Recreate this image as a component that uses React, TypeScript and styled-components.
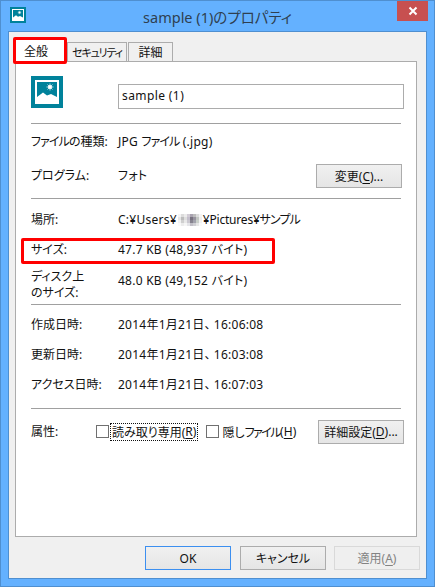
import React from 'react';
import styled, { createGlobalStyle } from 'styled-components';

const FONT = `"Noto Sans", "Noto Sans CJK JP", sans-serif`;

const GlobalStyle = createGlobalStyle`
  html, body {
    margin: 0;
    padding: 0;
    background: #64b1ff;
  }
  * {
    box-sizing: border-box;
  }
`;

const Window = styled.div`
  position: relative;
  width: 435px;
  height: 587px;
  padding: 0 7px 7px;
  display: flex;
  flex-direction: column;
  background: #64b1ff;
  border: 1px solid #4f8fd0;
  font-family: ${FONT};
  font-feature-settings: "palt";
  font-size: 12px;
  color: #111;
`;

const TitleBar = styled.div`
  position: relative;
  height: 30px;
  flex: none;
  display: flex;
  align-items: center;
  justify-content: center;
  font-size: 14.5px;
  color: #2f3f50;
`;

const AppIcon = styled.div`
  position: absolute;
  left: 2px;
  top: 6px;
  display: flex;
`;

const CloseButton = styled.div`
  position: absolute;
  right: -1px;
  top: 0;
  width: 31px;
  height: 20px;
  background: #c75050;
  display: flex;
  align-items: center;
  justify-content: center;
`;

const Client = styled.div`
  flex: 1;
  padding: 6px 9px 8px 6px;
  display: flex;
  flex-direction: column;
  background: #f0f0f0;
  border: 1px solid #4f8fd0;
`;

const TabStrip = styled.div`
  display: flex;
  align-items: flex-end;
  height: 24px;
  flex: none;
  gap: 1px;
  position: relative;
  z-index: 1;
  margin-bottom: -1px;
`;

const Tab = styled.div<{ $active?: boolean; $width: number }>`
  width: ${(p) => p.$width}px;
  height: ${(p) => (p.$active ? 24 : 20)}px;
  display: flex;
  align-items: center;
  justify-content: ${(p) => (p.$active ? 'flex-start' : 'center')};
  padding-left: ${(p) => (p.$active ? 8 : 0)}px;
  white-space: nowrap;
  background: ${(p) => (p.$active ? '#fff' : '#f0f0f0')};
  border: 1px solid #acacac;
  border-bottom: ${(p) => (p.$active ? 'none' : '1px solid #acacac')};
`;

const TabKana = styled.span`
  font-size: 11px;
  letter-spacing: -1.2px;
`;

const Panel = styled.div`
  flex: none;
  height: 476px;
  padding: 14px 15px 0;
  background: #fff;
  border: 1px solid #acacac;
  display: flex;
  flex-direction: column;
`;

const NameRow = styled.div`
  display: flex;
  align-items: flex-start;
  gap: 55px;
  height: 47px;
`;

const NameInput = styled.div`
  width: 287px;
  height: 25px;
  margin-top: 8px;
  margin-right: -3px;
  padding: 0 0 3px 3px;
  display: flex;
  align-items: center;
  letter-spacing: 0.4px;
  border: 1px solid #acacac;
`;

const Divider = styled.div`
  height: 1px;
  flex: none;
  background: #a0a0a0;
`;

const Section = styled.div<{ $height: number; $pad?: number }>`
  height: ${(p) => p.$height}px;
  padding-top: ${(p) => p.$pad ?? 0}px;
  flex: none;
  display: flex;
  flex-direction: column;
`;

const Row = styled.div<{ $height?: number }>`
  display: flex;
  align-items: center;
  height: ${(p) => p.$height ?? 30}px;
  flex: none;
`;

const TopRow = styled.div`
  display: flex;
  align-items: flex-start;
  height: 45px;
  flex: none;
`;

const Label = styled.div<{ $width?: number; $top?: number }>`
  width: ${(p) => p.$width ?? 87}px;
  margin-top: ${(p) => p.$top ?? 0}px;
  flex: none;
  line-height: 16px;
`;

const Value = styled.div<{ $top?: number }>`
  flex: 1;
  margin-top: ${(p) => p.$top ?? 0}px;
  line-height: 16px;
  display: flex;
  align-items: center;
  white-space: nowrap;
  letter-spacing: 0.25px;
`;

const Kana = styled.span<{ $by?: number }>`
  letter-spacing: -${(p) => p.$by ?? 0.9}px;
`;

const Comma = styled.span`
  margin-right: 3px;
`;

const PathTail = styled.span`
  letter-spacing: -0.2px;
`;

const Mosaic = styled.div`
  display: grid;
  grid-template-columns: repeat(8, 3px);
  grid-auto-rows: 3px;
  margin: 0 1px;
`;

const MosaicCell = styled.div<{ $shade: string }>`
  background: ${(p) => p.$shade};
`;

const Key = styled.span`
  text-decoration: underline;
  text-underline-offset: 2px;
`;

const Button = styled.div<{ $disabled?: boolean; $primary?: boolean; $shift?: number }>`
  width: 86px;
  height: 24px;
  margin-right: ${(p) => -(p.$shift ?? 0)}px;
  flex: none;
  display: flex;
  align-items: center;
  justify-content: center;
  white-space: nowrap;
  background: ${(p) => (p.$disabled ? '#efefef' : 'linear-gradient(#f0f0f0, #e5e5e5)')};
  border: 1px solid ${(p) => (p.$disabled ? '#d9d9d9' : p.$primary ? '#3c8ff0' : '#acacac')};
  color: ${(p) => (p.$disabled ? '#838383' : '#111')};
`;

const Spacer = styled.div`
  flex: 1;
`;

const Checkbox = styled.div`
  width: 13px;
  height: 13px;
  flex: none;
  background: #fff;
  border: 1px solid #707070;
`;

const CheckLabel = styled.div<{ $focus?: boolean }>`
  margin-left: 2px;
  margin-right: ${(p) => (p.$focus ? 9 : 0)}px;
  padding: 0 1px;
  height: 16px;
  display: flex;
  align-items: center;
  white-space: nowrap;
  outline: ${(p) => (p.$focus ? '1px dotted #111' : 'none')};
`;

const Footer = styled.div`
  flex: 1;
  display: flex;
  align-items: flex-start;
  justify-content: flex-end;
  gap: 8px;
  padding: 9px 0 0;
  margin-right: -3px;
`;

const Callout = styled.div<{ $left: number; $top: number; $width: number; $height: number }>`
  position: absolute;
  z-index: 2;
  left: ${(p) => p.$left}px;
  top: ${(p) => p.$top}px;
  width: ${(p) => p.$width}px;
  height: ${(p) => p.$height}px;
  border: 3px solid #ff0000;
  border-radius: 2px;
  pointer-events: none;
`;

const mosaic = [
  '#f4f4f4', '#dcdcdc', '#ececec', '#d2ccd6', '#a9a3b0', '#bdbdbd', '#dcdcdc', '#f4f4f4',
  '#e6e6e6', '#bcbcbc', '#dedede', '#c4bfcc', '#77727f', '#97939f', '#c2c6c2', '#eeeeee',
  '#f2f2f2', '#cfcfcf', '#e8e8e8', '#cbc8d0', '#86838f', '#a3a3ad', '#cad0ca', '#f2f2f2',
  '#fafafa', '#ececec', '#f6f6f6', '#e4e4e8', '#c2c0c8', '#d0d0d4', '#e6e6e6', '#fafafa',
];

function PictureIcon({ size }: { size: number }) {
  return (
    <svg width={size} height={size} viewBox="0 0 32 32" style={{ flex: 'none' }}>
      <rect width="32" height="32" fill="#00829b" />
      <rect x="4" y="4" width="24" height="24" fill="#fff" />
      <rect x="6" y="6" width="20" height="18" fill="#00829b" />
      <path d="M6 24 L6 21 L12 16.5 L16 19.5 L20 18 L26 21 L26 24 Z" fill="#fff" />
      <circle cx="19" cy="11" r="2" fill="#fff" />
      <path d="M19 7.5V14.5M15.5 11H22.5M16.5 8.5L21.5 13.5M21.5 8.5L16.5 13.5" stroke="#fff" strokeWidth="0.7" />
    </svg>
  );
}

const dates = [
  { label: '作成日時:', time: '16:06:08' },
  { label: '更新日時:', time: '16:03:08' },
  { label: 'アクセス日時:', time: '16:07:03' },
];

export default function App() {
  return (
    <>
      <GlobalStyle />
      <Window>
        <TitleBar>
          <AppIcon>
            <PictureIcon size={16} />
          </AppIcon>
          sample (1)のプロパティ
          <CloseButton>
            <svg width="10" height="10" viewBox="0 0 10 10">
              <path d="M1.5 1.5L8.5 8.5M8.5 1.5L1.5 8.5" stroke="#fff" strokeWidth="2" />
            </svg>
          </CloseButton>
        </TitleBar>
        <Client>
          <TabStrip>
            <Tab $active $width={51}>全般</Tab>
            <Tab $width={60}><TabKana>セキュリティ</TabKana></Tab>
            <Tab $width={45}>詳細</Tab>
          </TabStrip>
          <Panel>
            <NameRow>
              <PictureIcon size={32} />
              <NameInput>sample (1)</NameInput>
            </NameRow>
            <Divider />
            <Section $height={74}>
              <Row $height={36}>
                <Label><Kana>ファイル</Kana>の種類:</Label>
                <Value><span>JPG <Kana>ファイル</Kana> (.jpg)</span></Value>
              </Row>
              <Row $height={32}>
                <Label>プログラム:</Label>
                <Value>フォト</Value>
                <Button $shift={1}>変更(<Key>C</Key>)...</Button>
              </Row>
            </Section>
            <Divider />
            <Section $height={105}>
              <Row $height={42}>
                <Label>場所:</Label>
                <Value>
                  C:¥Users¥
                  <Mosaic>
                    {mosaic.map((shade, i) => (
                      <MosaicCell key={i} $shade={shade} />
                    ))}
                  </Mosaic>
                  <PathTail>¥Pictures¥<Kana>サンプル</Kana></PathTail>
                </Value>
              </Row>
              <Row $height={18}>
                <Label>サイズ:</Label>
                <Value>47.7 KB (48,937 バイト)</Value>
              </Row>
              <TopRow>
                <Label $top={10}>ディスク上<br />のサイズ:</Label>
                <Value $top={14}>48.0 KB (49,152 バイト)</Value>
              </TopRow>
            </Section>
            <Divider />
            <Section $height={103} $pad={5}>
              {dates.map((d) => (
                <Row key={d.label}>
                  <Label>{d.label}</Label>
                  <Value>
                    <span>2014年1月21日<Comma>、</Comma>{d.time}</span>
                  </Value>
                </Row>
              ))}
            </Section>
            <Divider />
            <Row $height={45}>
              <Label $width={65}>属性:</Label>
              <Checkbox />
              <CheckLabel $focus>読み取り専用(<Key>R</Key>)</CheckLabel>
              <Checkbox />
              <CheckLabel>隠し<Kana $by={1.5}>ファイル</Kana>(<Key>H</Key>)</CheckLabel>
              <Spacer />
              <Button $shift={3}>詳細設定(<Key>D</Key>)...</Button>
            </Row>
          </Panel>
          <Footer>
            <Button $primary $shift={-1}>OK</Button>
            <Button>キャンセル</Button>
            <Button $disabled>適用(<Key>A</Key>)</Button>
          </Footer>
        </Client>
        <Callout $left={12} $top={36} $width={54} $height={27} />
        <Callout $left={20} $top={237} $width={254} $height={26} />
      </Window>
    </>
  );
}
